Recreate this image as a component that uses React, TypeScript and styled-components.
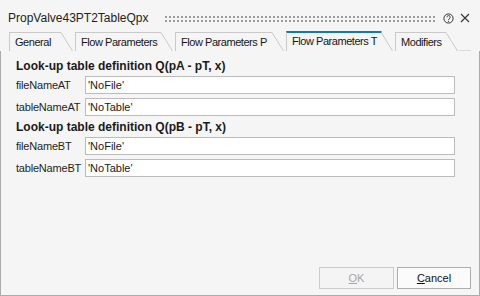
import React from "react";
import styled, { createGlobalStyle } from "styled-components";

const Global = createGlobalStyle`
  html, body { margin: 0; padding: 0; background: #f5f5f5; }
  body { font-family: "Liberation Sans", Arial, sans-serif; }
  * { box-sizing: border-box; }
`;

const Window = styled.div`
  width: 480px;
  height: 296px;
  display: flex;
  flex-direction: column;
  background: #f5f5f5;
  color: #1e1e1e;
  overflow: hidden;
`;

const TitleBar = styled.div`
  height: 31px;
  flex: none;
  display: flex;
  align-items: flex-start;
  padding: 11px 10px 0 8px;
`;

const Title = styled.div`
  font-size: 12px;
  line-height: 14px;
  color: #222;
  white-space: nowrap;
`;

const Grip = styled.div`
  flex: 1;
  height: 8px;
  margin: 4px 8px 0 15px;
  background-image: radial-gradient(circle, #9c9c9c 0.9px, transparent 1.2px);
  background-size: 4px 4px;
  background-position: 0 0;
`;

const IconGroup = styled.div`
  display: flex;
  align-items: center;
  gap: 6px;
  margin-top: 1px;
  height: 12px;
`;

const TabRow = styled.div`
  height: 20px;
  flex: none;
  display: flex;
  align-items: flex-end;
  gap: 2px;
  padding-left: 9px;
`;

const Tab = styled.div<{ $active?: boolean }>`
  display: flex;
  align-items: stretch;
  height: ${(p) => (p.$active ? 20 : 19)}px;
`;

const TabLabel = styled.div<{ $active?: boolean; $w: number }>`
  width: ${(p) => p.$w}px;
  border-left: 1px solid #c9c9c9;
  border-top: ${(p) => (p.$active ? "2px solid #137ab0" : "1px solid #c9c9c9")};
  padding: ${(p) => (p.$active ? 2 : 3)}px 0 0 5px;
  font-size: 11px;
  line-height: 13px;
  letter-spacing: -0.45px;
  white-space: nowrap;
  color: #161616;
  background: #f5f5f5;
`;

const TabFiller = styled.div`
  width: 12px;
  height: 1px;
  background: #dcdcdc;
  margin-left: -1px;
`;

const Body = styled.div`
  flex: 1;
  display: flex;
  flex-direction: column;
  border: 1px solid #ababab;
  border-top: none;
  padding: 8px 8px 6px 15px;
`;

const Form = styled.div`
  display: flex;
  flex-direction: column;
  padding-right: 16px;
`;

const Heading = styled.div<{ $first?: boolean }>`
  font-size: 12px;
  line-height: 14px;
  font-weight: bold;
  color: #1a1a1a;
  margin-top: ${(p) => (p.$first ? 0 : 4)}px;
  margin-bottom: 3px;
  white-space: nowrap;
`;

const Row = styled.div<{ $first?: boolean }>`
  display: flex;
  align-items: center;
  height: 18px;
  margin-top: ${(p) => (p.$first ? 0 : 4)}px;
`;

const Label = styled.div`
  width: 69px;
  flex: none;
  font-size: 11px;
  letter-spacing: -0.2px;
  color: #1e1e1e;
  white-space: nowrap;
`;

const Input = styled.div`
  flex: 1;
  height: 18px;
  border: 1px solid #bcbcbc;
  background: #fff;
  font-size: 11px;
  line-height: 16px;
  padding-left: 2px;
  color: #1a1a1a;
  white-space: nowrap;
`;

const Footer = styled.div`
  margin-top: auto;
  display: flex;
  justify-content: flex-end;
  gap: 3px;
`;

const Button = styled.div<{ $disabled?: boolean; $w: number }>`
  width: ${(p) => p.$w}px;
  height: 22px;
  display: flex;
  align-items: center;
  justify-content: center;
  font-size: 11px;
  border: 1px solid ${(p) => (p.$disabled ? "#cccccc" : "#adadad")};
  background: ${(p) => (p.$disabled ? "#f4f4f4" : "#fbfbfb")};
  color: ${(p) => (p.$disabled ? "#a6a6a6" : "#111")};
  u { text-decoration: underline; }
`;

function Slant({ active }: { active?: boolean }) {
  const h = active ? 20 : 19;
  const top = active ? 1 : 0.5;
  return (
    <svg width="12" height={h} viewBox={`0 0 12 ${h}`} style={{ display: "block" }}>
      <polygon points={`0,0 ${0.5},0 12,${h} 0,${h}`} fill="#f5f5f5" />
      {active && <rect x="0" y="0" width="0.6" height="2" fill="#137ab0" />}
      <line x1="0" y1={top} x2="11.5" y2={h} stroke="#c9c9c9" strokeWidth="1" />
    </svg>
  );
}

function HelpIcon() {
  return (
    <svg width="11" height="11" viewBox="0 0 11 11">
      <circle cx="5.5" cy="5.5" r="4.6" fill="none" stroke="#333" strokeWidth="1" />
      <path d="M3.9 4.3 A1.65 1.65 0 1 1 6.4 5.7 C5.8 6.1 5.5 6.4 5.5 7.1" fill="none" stroke="#333" strokeWidth="1" />
      <circle cx="5.5" cy="8.3" r="0.6" fill="#333" />
    </svg>
  );
}

function CloseIcon() {
  return (
    <svg width="10" height="10" viewBox="0 0 10 10">
      <path d="M1 1 L9 9 M9 1 L1 9" stroke="#333" strokeWidth="1.1" />
    </svg>
  );
}

const tabs = [
  { label: "General", w: 52 },
  { label: "Flow Parameters", w: 86 },
  { label: "Flow Parameters P", w: 97 },
  { label: "Flow Parameters T", w: 95, active: true },
  { label: "Modifiers", w: 51 },
];

const sections = [
  {
    title: "Look-up table definition Q(pA - pT, x)",
    rows: [
      ["fileNameAT", "'NoFile'"],
      ["tableNameAT", "'NoTable'"],
    ],
  },
  {
    title: "Look-up table definition Q(pB - pT, x)",
    rows: [
      ["fileNameBT", "'NoFile'"],
      ["tableNameBT", "'NoTable'"],
    ],
  },
];

export default function App() {
  return (
    <>
      <Global />
      <Window>
        <TitleBar>
          <Title>PropValve43PT2TableQpx</Title>
          <Grip />
          <IconGroup>
            <HelpIcon />
            <CloseIcon />
          </IconGroup>
        </TitleBar>
        <TabRow>
          {tabs.map((t) => (
            <Tab key={t.label} $active={t.active}>
              <TabLabel $active={t.active} $w={t.w}>
                {t.label}
              </TabLabel>
              <Slant active={t.active} />
            </Tab>
          ))}
          <TabFiller />
        </TabRow>
        <Body>
          <Form>
            {sections.map((s, si) => (
              <React.Fragment key={s.title}>
                <Heading $first={si === 0}>{s.title}</Heading>
                {s.rows.map(([l, v], ri) => (
                  <Row key={l} $first={ri === 0}>
                    <Label>{l}</Label>
                    <Input>{v}</Input>
                  </Row>
                ))}
              </React.Fragment>
            ))}
          </Form>
          <Footer>
            <Button $disabled $w={75}>
              <span>
                <u>O</u>K
              </span>
            </Button>
            <Button $w={74}>
              <span>
                <u>C</u>ancel
              </span>
            </Button>
          </Footer>
        </Body>
      </Window>
    </>
  );
}
